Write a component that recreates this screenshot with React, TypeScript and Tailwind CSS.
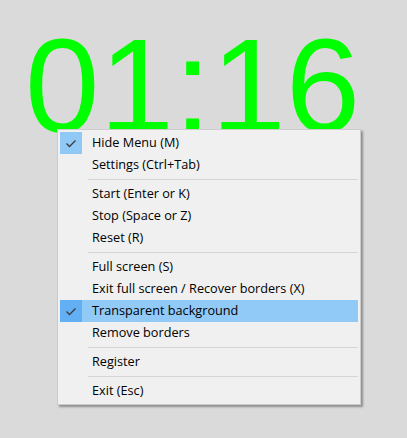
import React from "react";

type Item = { label: string; checked?: boolean; active?: boolean } | "sep";

const ITEMS: Item[] = [
  { label: "Hide Menu (M)", checked: true },
  { label: "Settings (Ctrl+Tab)" },
  "sep",
  { label: "Start (Enter or K)" },
  { label: "Stop (Space or Z)" },
  { label: "Reset (R)" },
  "sep",
  { label: "Full screen (S)" },
  { label: "Exit full screen / Recover borders (X)" },
  { label: "Transparent background", checked: true, active: true },
  { label: "Remove borders" },
  "sep",
  { label: "Register" },
  "sep",
  { label: "Exit (Esc)" },
];

const Check = () => (
  <svg width="22" height="22" viewBox="0 0 22 22">
    <path d="M6.5 11.5 L9.5 14.5 L15.5 8.5" fill="none" stroke="#3a3a3a" strokeWidth="1.3" />
  </svg>
);

export default function App() {
  return (
    <div className="relative w-[407px] h-[438px] bg-[#dadada] overflow-hidden" style={{ fontFamily: "'Open Sans', 'Noto Sans CJK SC', sans-serif" }}>
      <div className="pl-[25px] pt-[19px] text-[134px] leading-none text-[#00ff00]" style={{ fontFamily: "'Liberation Sans', Arial, sans-serif" }}>
        01:16
      </div>

      <div className="absolute left-[57px] top-[129px] w-[304px] bg-[#f0f0f0] border border-[#cccccc] p-[2px] shadow-[2px_2px_2px_rgba(0,0,0,0.35)]">
        {ITEMS.map((it, i) =>
          it === "sep" ? (
            <div key={i} className="h-[7px] flex items-center pl-[28px]">
              <div className="h-px w-full bg-[#d5d5d5]" />
            </div>
          ) : (
            <div key={i} className={`flex items-center h-[22px] ${it.active ? "bg-[#91c9f7]" : ""}`}>
              <div className={`w-[22px] h-[22px] ${it.checked ? (it.active ? "bg-[#62b0f3]" : "bg-[#90c8f6]") : ""}`}>
                {it.checked && <Check />}
              </div>
              <span className="pl-[10px] text-[12.7px] text-black whitespace-nowrap">{it.label}</span>
            </div>
          )
        )}
      </div>
    </div>
  );
}
